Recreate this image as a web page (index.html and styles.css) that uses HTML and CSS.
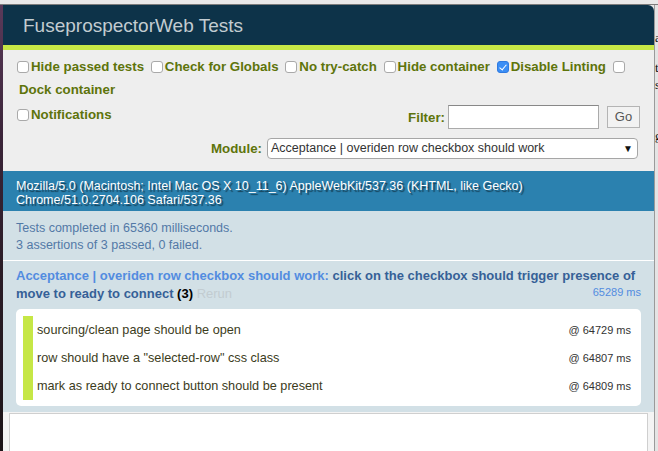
FILE: index.html
```html
<!DOCTYPE html>
<html>
<head>
<meta charset="utf-8">
<title>FuseprospectorWeb Tests</title>
<link rel="stylesheet" href="styles.css">
</head>
<body>
<div class="screen">
  <div class="topbar"></div>
  <div class="stage">
    <div class="leftstrip"></div>
    <div class="qunit">
      <h1 class="qheader">FuseprospectorWeb Tests</h1>
      <div class="banner"></div>
      <div class="toolbar">
        <div class="opts">
          <label class="opt"><span class="cb"></span>Hide passed tests</label>
          <label class="opt"><span class="cb"></span>Check for Globals</label>
          <label class="opt"><span class="cb"></span>No try-catch</label>
          <label class="opt"><span class="cb"></span>Hide container</label>
          <label class="opt"><span class="cb checked"></span>Disable Linting</label>
          <label class="opt wrap"><span class="cb"></span><wbr><span class="dock">Dock container</span></label>
        </div>
        <div class="filter-row">
          <label class="opt notif"><span class="cb"></span>Notifications</label>
          <div class="filter">
            <span class="flabel">Filter:</span>
            <span class="finput"></span>
            <span class="gobtn">Go</span>
          </div>
        </div>
        <div class="module-row">
          <span class="flabel">Module:</span>
          <span class="select">Acceptance | overiden row checkbox should work<span class="arrow">&#9660;</span></span>
        </div>
      </div>
      <div class="ua">Mozilla/5.0 (Macintosh; Intel Mac OS X 10_11_6) AppleWebKit/537.36 (KHTML, like Gecko)<br>Chrome/51.0.2704.106 Safari/537.36</div>
      <div class="result">Tests completed in 65360 milliseconds.<br>3 assertions of 3 passed, 0 failed.</div>
      <div class="test">
        <div class="test-head"><span class="module">Acceptance | overiden row checkbox should work:</span> <span class="tname">click on the checkbox should trigger presence of<br><span class="runtime">65289 ms</span>move to ready to connect</span> <span class="counts">(3)</span> <span class="rerun">Rerun</span></div>
        <ol class="asserts">
          <li><span class="msg">sourcing/clean page should be open</span><span class="at">@ 64729 ms</span></li>
          <li><span class="msg">row should have a "selected-row" css class</span><span class="at">@ 64807 ms</span></li>
          <li><span class="msg">mark as ready to connect button should be present</span><span class="at">@ 64809 ms</span></li>
        </ol>
      </div>
      <div class="fixture-wrap"><div class="fixture"></div></div>
    </div>
    <div class="rightstrip">
      <span class="frag f1">a</span>
      <span class="frag f2">t</span>
      <span class="frag f3">s</span>
      <span class="frag f4">g</span>
    </div>
  </div>
</div>
</body>
</html>
```
FILE: styles.css
```css
* { box-sizing: border-box; }
html, body { margin: 0; padding: 0; }
body {
  width: 658px;
  height: 451px;
  overflow: hidden;
  background: #e6e6e6;
  font-family: "Liberation Sans", Arial, sans-serif;
}
.screen { width: 658px; height: 451px; display: flex; flex-direction: column; }
.topbar {
  height: 5px;
  background: #e9e9e9;
  border-bottom: 1px solid #7c7c7c;
  flex: none;
}
.stage { flex: 1; display: flex; min-height: 0; }
.leftstrip {
  width: 3px;
  flex: none;
  background: linear-gradient(#5a3a5a 0%, #3a2438 30%, #2a1c26 60%, #1c1418 100%);
}
.qunit {
  width: 651px;
  flex: none;
  background: #eeeeee;
  display: flex;
  flex-direction: column;
  overflow: hidden;
  border-radius: 0 6px 0 0;
}
.rightstrip {
  flex: 1;
  background: #e4e4e4;
  border-left: 1px solid #9a9a9a;
  position: relative;
  overflow: hidden;
}
.frag { position: absolute; left: 0; font-size: 13px; color: #111; font-family: "Liberation Serif", serif; }
.f1 { top: 25px; }
.f2 { top: 55px; }
.f3 { top: 72px; }
.f4 { top: 123px; }

.qheader {
  margin: 0;
  height: 40px;
  padding: 11px 0 0 20px;
  background: #0d3349;
  color: #c2ccd1;
  font-size: 19px;
  line-height: 19px;
  font-weight: normal;
}
.banner { height: 5px; background: #c6e746; }

.toolbar {
  padding: 5px 14px 12px 14px;
  color: #5e740b;
  font-weight: bold;
  font-size: 13.3px;
}
.opts { line-height: 23px; width: 612px; }
.opt { white-space: nowrap; margin-right: 3px; }
.opt.wrap { white-space: normal; }
.dock { white-space: nowrap; margin-left: 2px; }
.cb {
  display: inline-block;
  width: 12px;
  height: 12px;
  border: 1px solid #a9a9a9;
  border-radius: 3px;
  background: #fff;
  vertical-align: -2px;
  margin-right: 2px;
  position: relative;
}
.cb.checked { background: #3b8ef5; border-color: #2f7ae0; }
.cb.checked::after {
  content: "";
  position: absolute;
  left: 3px;
  top: 1px;
  width: 3px;
  height: 6px;
  border: solid #fff;
  border-width: 0 1.5px 1.5px 0;
  transform: rotate(40deg);
}
.filter-row { display: flex; justify-content: space-between; align-items: flex-start; margin-top: 4px; }
.notif { line-height: 20px; }
.filter { display: flex; align-items: center; }
.flabel { margin-right: 3px; }
.finput {
  display: inline-block;
  width: 151px;
  height: 24px;
  background: #fff;
  border: 1px solid #aaa;
  border-top-color: #888;
  margin-right: 8px;
}
.gobtn {
  display: inline-block;
  width: 33px;
  height: 22px;
  line-height: 20px;
  border: 1px solid #b4b4b4;
  background: #f2f2f2;
  color: #555;
  font-weight: normal;
  text-align: center;
  font-size: 13px;
}
.module-row { display: flex; justify-content: flex-end; align-items: center; margin-top: 9px; padding-right: 2px; }
.select {
  display: inline-block;
  position: relative;
  width: 371px;
  height: 21px;
  line-height: 19px;
  border: 1px solid #a6a6a6;
  border-radius: 4px;
  background: #fff;
  color: #333;
  font-weight: normal;
  font-size: 12.5px;
  padding-left: 3px;
  margin-left: 2px;
}
.arrow { position: absolute; right: 4px; top: 0; font-size: 10px; color: #111; }

.ua {
  background: #2b81af;
  color: #fff;
  text-shadow: rgba(0,0,0,0.5) 2px 2px 1px;
  font-size: 12.5px;
  line-height: 14px;
  padding: 8px 13px 4px 13px;
  height: 40px;
}
.result {
  background: #d2e0e6;
  color: #5279a6;
  font-size: 12.5px;
  line-height: 17px;
  padding: 9px 13px 6px 13px;
  height: 50px;
  border-bottom: 1px solid #fff;
}
.test {
  background: #d2e0e6;
  padding: 6px 13px 6px 13px;
}
.test-head {
  font-size: 13px;
  line-height: 18px;
  font-weight: bold;
}
.module { color: #528ce0; }
.tname { color: #366097; }
.counts { color: #000; }
.rerun { color: #c2ccd1; font-weight: normal; }
.runtime { float: right; font-size: 11px; color: #528ce0; font-weight: normal; line-height: 15px; }
.asserts {
  list-style: none;
  margin: 6px 0 0 0;
  padding: 7px 10px 6px 7px;
  background: #fff;
  border-radius: 5px;
}
.asserts li {
  display: flex;
  justify-content: space-between;
  align-items: center;
  height: 28px;
  border-left: 10px solid #c6e746;
  padding: 0 0 0 4px;
  font-size: 12.7px;
  color: #3c3c1c;
}
.at { font-size: 11px; color: #333; }
.fixture-wrap { flex: 1; background: #f4f4f4; padding: 1px 6px 0 6px; }
.fixture { height: 100%; background: #fff; border: 1px solid #cfcfcf; border-bottom: none; }
```
